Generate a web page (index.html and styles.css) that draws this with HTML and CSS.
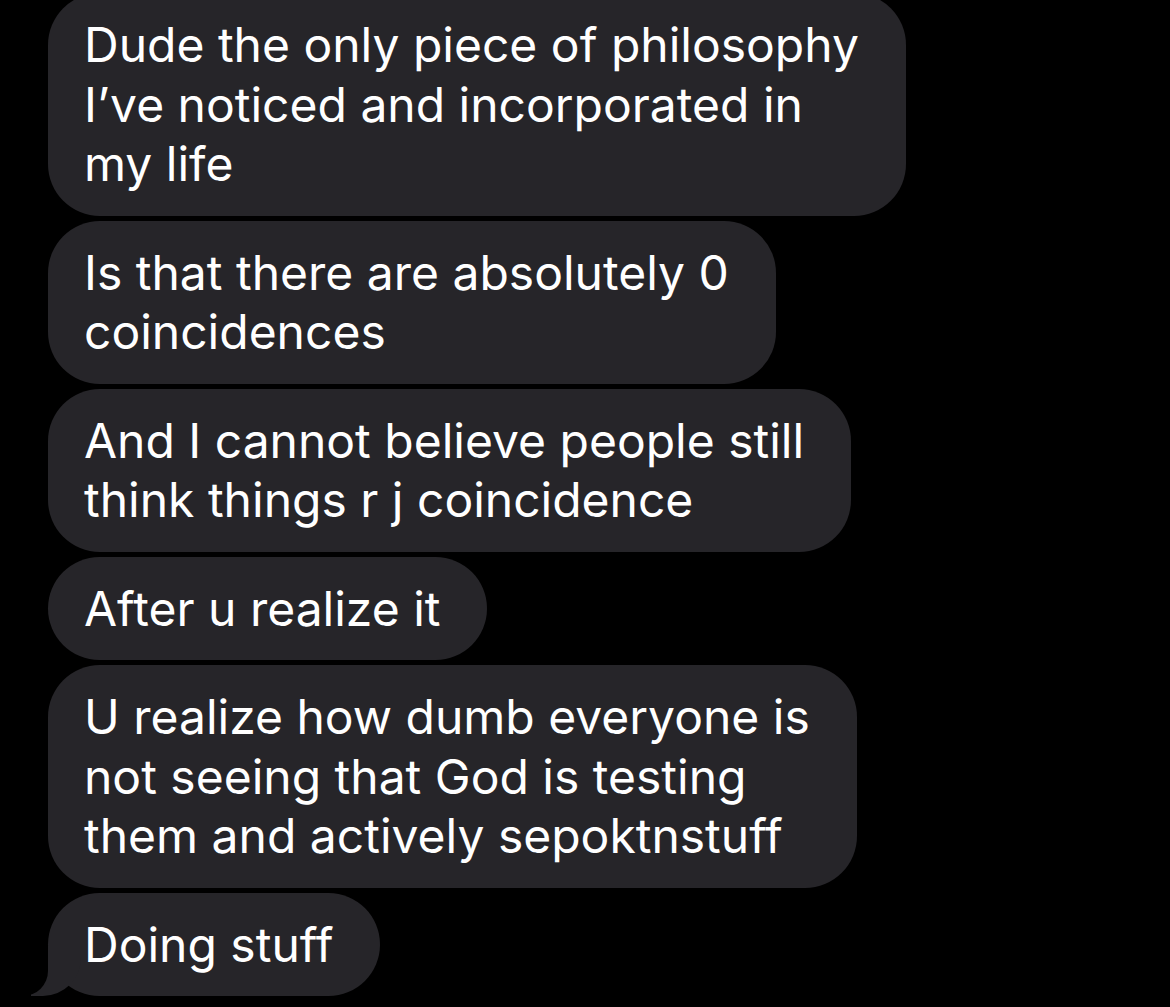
FILE: index.html
```html
<!DOCTYPE html>
<html>
<head>
<meta charset="utf-8">
<link rel="stylesheet" href="styles.css">
</head>
<body>
<div class="thread">
  <div class="bubble">Dude the only piece of philosophy<br>I’ve noticed and incorporated in<br>my life</div>
  <div class="bubble">Is that there are absolutely 0<br>coincidences</div>
  <div class="bubble">And I cannot believe people still<br>think things r j coincidence</div>
  <div class="bubble">After u realize it</div>
  <div class="bubble">U realize how dumb everyone is<br>not seeing that God is testing<br>them and actively sepoktnstuff</div>
  <div class="bubble tail">Doing stuff</div>
</div>
</body>
</html>
```
FILE: styles.css
```css
html, body {
  margin: 0;
  padding: 0;
  background: #000;
}
body {
  width: 1170px;
  height: 1007px;
  overflow: hidden;
}
.thread {
  display: flex;
  flex-direction: column;
  align-items: flex-start;
  gap: 5px;
  padding-left: 48px;
  margin-top: -7px;
}
.bubble {
  position: relative;
  background: #262529;
  color: #fff;
  font-family: Inter, "Noto Sans", sans-serif;
  font-size: 48px;
  line-height: 59.5px;
  white-space: nowrap;
  padding: 22px 47px 22px 36px;
  border-radius: 52px;
}
.tail::before {
  content: "";
  position: absolute;
  bottom: 0;
  left: -17px;
  width: 50px;
  height: 50px;
  background: #262529;
  border-bottom-right-radius: 38px;
  z-index: 0;
}
.tail::after {
  content: "";
  position: absolute;
  bottom: 0;
  left: -25px;
  width: 25px;
  height: 50px;
  background: #000;
  border-bottom-right-radius: 25px;
  z-index: 1;
}
```
